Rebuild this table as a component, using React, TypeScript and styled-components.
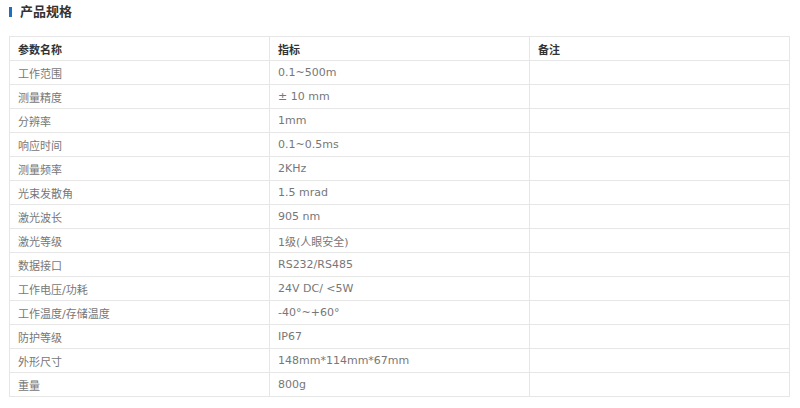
import React from "react";
import styled, { createGlobalStyle } from "styled-components";

const GlobalStyle = createGlobalStyle`
  html, body { margin: 0; padding: 0; background: #fff; }
  body { font-family: "DejaVu Sans", "Noto Sans CJK SC", sans-serif; }
`;

const Page = styled.div`
  width: 800px;
  height: 408px;
  padding: 3px 11px 0 9px;
  box-sizing: border-box;
`;

const TitleRow = styled.div`
  display: flex;
  align-items: center;
  gap: 8px;
  height: 15px;
`;

const TitleBar = styled.span`
  width: 3px;
  height: 10px;
  margin-top: 3px;
  background: #1e6fbf;
`;

const Title = styled.h2`
  margin: 0;
  font-family: "Noto Sans CJK SC", sans-serif;
  font-size: 13px;
  font-weight: 700;
  color: #333;
  line-height: 15px;
`;

const Table = styled.table`
  margin-top: 18px;
  width: 780px;
  border-collapse: collapse;
  table-layout: fixed;
`;

const Row = styled.tr`
  height: 24px;
`;

const Cell = styled.td<{ $head?: boolean }>`
  height: 24px;
  padding: 0 0 0 8px;
  border: 1px solid #e6e6e6;
  font-family: "DejaVu Sans", "Noto Sans CJK SC", sans-serif;
  font-size: 11px;
  font-weight: ${(p) => (p.$head ? 700 : 400)};
  color: ${(p) => (p.$head ? "#333" : "#777")};
  text-align: left;
  vertical-align: middle;
  white-space: nowrap;
  box-sizing: border-box;
`;

const rows: [string, string][] = [
  ["工作范围", "0.1~500m"],
  ["测量精度", "± 10 mm"],
  ["分辨率", "1mm"],
  ["响应时间", "0.1~0.5ms"],
  ["测量频率", "2KHz"],
  ["光束发散角", "1.5 mrad"],
  ["激光波长", "905 nm"],
  ["激光等级", "1级(人眼安全)"],
  ["数据接口", "RS232/RS485"],
  ["工作电压/功耗", "24V DC/ <5W"],
  ["工作温度/存储温度", "-40°~+60°"],
  ["防护等级", "IP67"],
  ["外形尺寸", "148mm*114mm*67mm"],
  ["重量", "800g"],
];

export default function App() {
  return (
    <>
      <GlobalStyle />
      <Page>
        <TitleRow>
          <TitleBar />
          <Title>产品规格</Title>
        </TitleRow>
        <Table>
          <colgroup>
            <col style={{ width: 260 }} />
            <col style={{ width: 260 }} />
            <col style={{ width: 260 }} />
          </colgroup>
          <thead>
            <Row>
              <Cell as="th" $head>参数名称</Cell>
              <Cell as="th" $head>指标</Cell>
              <Cell as="th" $head>备注</Cell>
            </Row>
          </thead>
          <tbody>
            {rows.map(([k, v]) => (
              <Row key={k}>
                <Cell>{k}</Cell>
                <Cell>{v}</Cell>
                <Cell />
              </Row>
            ))}
          </tbody>
        </Table>
      </Page>
    </>
  );
}
